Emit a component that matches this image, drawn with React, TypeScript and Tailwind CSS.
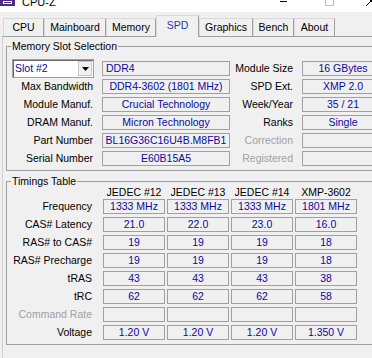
import React from "react";

const V = "text-[#0a0aa0]";

function Label({ children, gray = false }: { children: React.ReactNode; gray?: boolean }) {
  return (
    <div className={`text-right pr-[9px] leading-[15px] whitespace-nowrap ${gray ? "text-[#a0a0a0]" : "text-black"}`}>
      {children}
    </div>
  );
}

function Field({ children, left = false }: { children?: React.ReactNode; left?: boolean }) {
  return (
    <div
      className={`h-[15px] border border-[#a0a0a0] ${V} leading-[13px] whitespace-nowrap overflow-hidden ${
        left ? "pl-[3px] text-left" : "text-center"
      }`}
    >
      {children}
    </div>
  );
}

const tabs = [
  { name: "CPU", w: "w-[41px]" },
  { name: "Mainboard", w: "w-[62px]" },
  { name: "Memory", w: "w-[50px]" },
  { name: "SPD", w: "w-[43px]", sel: true },
  { name: "Graphics", w: "w-[54px]" },
  { name: "Bench", w: "w-[41px]" },
  { name: "About", w: "w-[41px]" },
];

const timings: { label: string; vals: string[]; gray?: boolean }[] = [
  { label: "Frequency", vals: ["1333 MHz", "1333 MHz", "1333 MHz", "1801 MHz"] },
  { label: "CAS# Latency", vals: ["21.0", "22.0", "23.0", "16.0"] },
  { label: "RAS# to CAS#", vals: ["19", "19", "19", "18"] },
  { label: "RAS# Precharge", vals: ["19", "19", "19", "18"] },
  { label: "tRAS", vals: ["43", "43", "43", "38"] },
  { label: "tRC", vals: ["62", "62", "62", "58"] },
  { label: "Command Rate", vals: ["", "", "", ""], gray: true },
  { label: "Voltage", vals: ["1.20 V", "1.20 V", "1.20 V", "1.350 V"] },
];

export default function App() {
  return (
    <div className="w-[372px] h-[358px] overflow-hidden bg-[#f0f0f0] font-['Liberation_Sans',Arial,sans-serif] text-[10.5px] text-black">
      {/* title bar */}
      <div className="w-[372px] h-[12px] bg-white overflow-hidden flex items-end">
        <div className="shrink-0 w-[15px] h-[16px] mb-[6px] bg-[#4b2c80] flex items-end justify-center">
          <div className="w-[9px] h-[3px] mb-[2px] border border-white" />
        </div>
        <div className="shrink-0 whitespace-nowrap ml-[7px] mb-[4px] text-[11px] leading-[12px] text-black">CPU-Z</div>
        <div className="shrink-0 ml-[224px] mb-[10px] w-[7px] h-[1px] bg-black" />
        <div className="shrink-0 ml-[38px] mb-[6px] w-[9px] h-[9px] border border-[#c0c0c0]" />
        <svg className="ml-[32px] mb-[6px] shrink-0" width="10" height="10" viewBox="0 0 10 10">
          <path d="M0 0L10 10M10 0L0 10" stroke="#000" strokeWidth="1" />
        </svg>
      </div>

      {/* tabs */}
      <div className="h-[24px] flex items-end pl-[3px]">
        {tabs.map((t) =>
          t.sel ? (
            <div
              key={t.name}
              className={`${t.w} relative h-[22px] -mb-[1px] bg-[#f0f0f0] border-l border-t border-r border-l-[#d8d8d8] border-t-[#d8d8d8] border-r-[#a0a0a0] text-center leading-[18px] text-[#1f3fa8]`}
            >
              {t.name}
            </div>
          ) : (
            <div
              key={t.name}
              className={`${t.w} h-[18px] bg-[#f0f0f0] border-l border-t border-r border-l-[#d8d8d8] border-t-[#d8d8d8] border-r-[#a0a0a0] text-center leading-[16px]`}
            >
              {t.name}
            </div>
          )
        )}
      </div>

      {/* panel */}
      <div className="ml-[2px] border-l border-t border-l-[#d0d0d0] border-t-[#a0a0a0] w-[420px] h-[400px] pt-[3px]">
        <fieldset className="ml-[3px] w-[410px] border border-[#a0a0a0] pb-[4px]">
          <legend className="ml-[4px] px-[1px] leading-[13px]">Memory Slot Selection</legend>
          <div className="grid grid-cols-[90px_128px_72px_82px] auto-rows-[15px] gap-y-[3px] pl-[5px] pt-[8px]">
            <div className="self-center h-[19px] w-[82px] border border-[#a0a0a0] shadow-[inset_1px_1px_0_#696969] bg-white flex items-center">
              <span className={`pl-[2px] flex-1 ${V}`}>Slot #2</span>
              <div className="h-[15px] w-[14px] mr-[1px] bg-[#f0f0f0] border border-[#c8c8c8] flex items-center justify-center">
                <svg width="7" height="4" viewBox="0 0 7 4">
                  <path d="M0 0h7L3.5 4z" fill="#000" />
                </svg>
              </div>
            </div>
            <Field left>DDR4</Field>
            <Label>Module Size</Label>
            <Field>16 GBytes</Field>

            <Label>Max Bandwidth</Label>
            <Field>DDR4-3602 (1801 MHz)</Field>
            <Label>SPD Ext.</Label>
            <Field>XMP 2.0</Field>

            <Label>Module Manuf.</Label>
            <Field>Crucial Technology</Field>
            <Label>Week/Year</Label>
            <Field>35 / 21</Field>

            <Label>DRAM Manuf.</Label>
            <Field>Micron Technology</Field>
            <Label>Ranks</Label>
            <Field>Single</Field>

            <Label>Part Number</Label>
            <Field>BL16G36C16U4B.M8FB1</Field>
            <Label gray>Correction</Label>
            <Field />

            <Label>Serial Number</Label>
            <Field>E60B15A5</Field>
            <Label gray>Registered</Label>
            <Field />
          </div>
        </fieldset>

        <fieldset className="ml-[3px] mt-[5px] w-[410px] border border-[#a0a0a0] pb-[4px]">
          <legend className="ml-[4px] px-[1px] leading-[11px]">Timings Table</legend>
          <div className="grid grid-cols-[89px_62px_62px_62px_62px] gap-x-[2px] gap-y-[3px] pl-[5px]">
            <div />
            {["JEDEC #12", "JEDEC #13", "JEDEC #14", "XMP-3602"].map((h) => (
              <div key={h} className="text-center leading-[10px] -mb-[1px]">
                {h}
              </div>
            ))}
            {timings.map((r) => (
              <React.Fragment key={r.label}>
                <Label gray={r.gray}>{r.label}</Label>
                {r.vals.map((v, i) => (
                  <Field key={i}>{v}</Field>
                ))}
              </React.Fragment>
            ))}
          </div>
        </fieldset>
      </div>
    </div>
  );
}
